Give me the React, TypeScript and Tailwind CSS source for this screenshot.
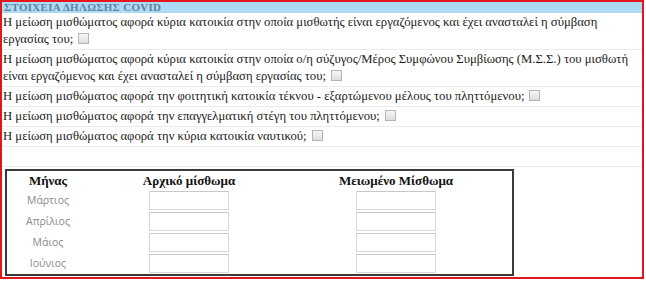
const questions = [
  'Η μείωση μισθώματος αφορά κύρια κατοικία στην οποία μισθωτής είναι εργαζόμενος και έχει ανασταλεί η σύμβαση εργασίας του;',
  'Η μείωση μισθώματος αφορά κύρια κατοικία στην οποία ο/η σύζυγος/Μέρος Συμφώνου Συμβίωσης (Μ.Σ.Σ.) του μισθωτή είναι εργαζόμενος και έχει ανασταλεί η σύμβαση εργασίας του;',
  'Η μείωση μισθώματος αφορά την φοιτητική κατοικία τέκνου - εξαρτώμενου μέλους του πληττόμενου;',
  'Η μείωση μισθώματος αφορά την επαγγελματική στέγη του πληττόμενου;',
  'Η μείωση μισθώματος αφορά την κύρια κατοικία ναυτικού;',
]

const months = ['Μάρτιος', 'Απρίλιος', 'Μάιος', 'Ιούνιος']

const CheckBox = () => (
  <span className="ml-[5px] inline-block h-[11px] w-[11px] translate-y-[1px] border border-[#b5b5b5] bg-gradient-to-b from-[#f6f6f6] to-[#dedede] align-baseline" />
)

const Field = () => (
  <div className="h-[19px] w-[80px] border border-[#d6d6d6] border-t-[#c8c8c8] bg-white" />
)

export default function App() {
  return (
    <div className="h-[281px] w-[646px] bg-white">
      <div className="w-[644px] border-2 border-[#e3161b] bg-white pb-[1px] font-['Liberation_Serif',serif] text-[12.7px] text-[#1a1a1a]">
        <div className="h-[11px] bg-[#aedbf4] pl-[2px] text-[11px] font-bold leading-[11px] tracking-[0.3px] text-[#5f7fa0]">
          ΣΤΟΙΧΕΙΑ ΔΗΛΩΣΗΣ COVID
        </div>

        {questions.map((q) => (
          <div key={q} className="border-b border-[#ececec] py-[1px] pl-[1px] leading-[17px]">
            {q}
            <CheckBox />
          </div>
        ))}
        <div className="h-[20px] border-b border-[#ececec]" />

        <div className="ml-[3px] mt-[2px] w-[509px] border-2 border-[#3a3a3a]">
          <div className="grid h-[19px] grid-cols-[82px_200px_214px] items-center text-center text-[13px] font-bold leading-[19px] text-[#111]">
            <div>Μήνας</div>
            <div>Αρχικό μίσθωμα</div>
            <div>Μειωμένο Μίσθωμα</div>
          </div>
          {months.map((m) => (
            <div key={m} className="grid h-[21px] grid-cols-[82px_200px_214px] items-center">
              <div className="text-center font-['Open_Sans',sans-serif] text-[10.5px] text-[#8a8a8a]">
                {m}
              </div>
              <div className="flex justify-center">
                <Field />
              </div>
              <div className="flex justify-center">
                <Field />
              </div>
            </div>
          ))}
        </div>
      </div>
    </div>
  )
}
